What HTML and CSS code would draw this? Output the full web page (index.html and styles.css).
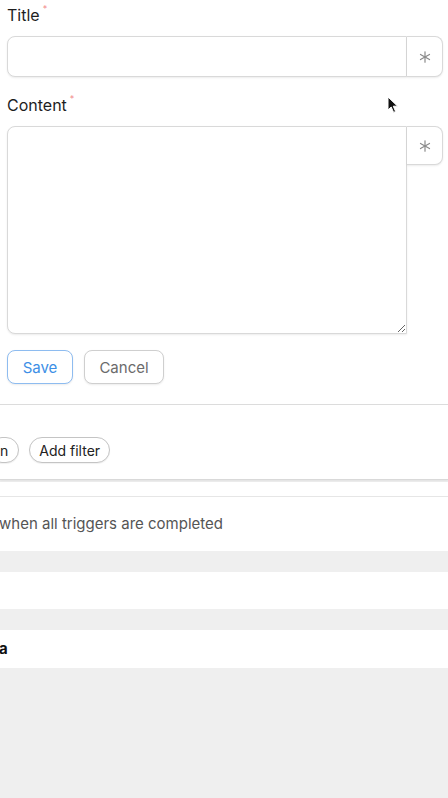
FILE: index.html
```html
<!DOCTYPE html>
<html>
<head>
<meta charset="utf-8">
<link rel="stylesheet" href="styles.css">
</head>
<body>
<div class="page">
  <section class="form">
    <div class="label">Title<span class="req">*</span></div>
    <div class="field">
      <input class="input" type="text">
      <div class="addon">
        <svg width="12" height="12" viewBox="0 0 12 12"><g stroke="#8a8a8a" stroke-width="1.2" stroke-linecap="round"><line x1="6" y1="0.8" x2="6" y2="11.2"/><line x1="1.5" y1="3.4" x2="10.5" y2="8.6"/><line x1="1.5" y1="8.6" x2="10.5" y2="3.4"/></g></svg>
      </div>
    </div>
    <div class="label label-content">Content<span class="req">*</span></div>
    <div class="field field-area">
      <textarea class="area"></textarea>
      <div class="addon addon-area">
        <svg width="12" height="12" viewBox="0 0 12 12"><g stroke="#8a8a8a" stroke-width="1.2" stroke-linecap="round"><line x1="6" y1="0.8" x2="6" y2="11.2"/><line x1="1.5" y1="3.4" x2="10.5" y2="8.6"/><line x1="1.5" y1="8.6" x2="10.5" y2="3.4"/></g></svg>
      </div>
    </div>
    <div class="actions">
      <button class="btn btn-primary">Save</button>
      <button class="btn">Cancel</button>
    </div>
    <svg class="cursor" width="12" height="18" viewBox="0 0 12 18"><path d="M1 1 L1 14 L4.2 11 L6.6 16.4 L8.6 15.5 L6.3 10.2 L10.6 10.2 Z" fill="#111" stroke="#fff" stroke-width="1"/></svg>
  </section>
  <section class="filters">
    <button class="pill pill-cut">n</button>
    <button class="pill">Add filter</button>
  </section>
  <section class="trig">
    <div class="trig-top"></div>
    <div class="trig-text">when all triggers are completed</div>
  </section>
  <div class="gap"></div>
  <section class="row row-empty"></section>
  <div class="gap"></div>
  <section class="row row-bold"><span class="bold-cut">a</span></section>
</div>
</body>
</html>
```
FILE: styles.css
```css
* { box-sizing: border-box; }
html, body {
  margin: 0;
  padding: 0;
  background: #efefef;
  font-family: Inter, "Noto Sans", "Liberation Sans", sans-serif;
  color: #222;
}
.page {
  width: 448px;
  overflow: hidden;
}
.form {
  position: relative;
  background: #fff;
  padding: 5px 5px 20px 7px;
  border-bottom: 1px solid #dcdcdc;
}
.label {
  font-size: 16px;
  line-height: 20px;
  color: #1e1e1e;
  height: 20px;
}
.label-content {
  margin-top: 18px;
}
.req {
  color: #f28b8b;
  font-size: 9px;
  vertical-align: top;
  position: relative;
  top: -6px;
  margin-left: 3px;
}
.field {
  display: flex;
  margin-top: 11px;
}
.field-area {
  align-items: flex-start;
}
.input {
  flex: 1;
  height: 41px;
  margin: 0;
  border: 1px solid #d9d9d9;
  border-radius: 8px 0 0 8px;
  background: #fff;
  box-shadow: 0 1px 2px rgba(0,0,0,0.08);
  outline: none;
}
.addon {
  width: 36px;
  height: 41px;
  border: 1px solid #d9d9d9;
  border-left: none;
  border-radius: 0 8px 8px 0;
  display: flex;
  align-items: center;
  justify-content: center;
  box-shadow: 0 1px 2px rgba(0,0,0,0.08);
  background: #fff;
}
.addon-area {
  height: 39px;
}
.area {
  flex: 1;
  height: 208px;
  margin: 0;
  border: 1px solid #d9d9d9;
  border-radius: 8px 0 0 8px;
  box-shadow: 0 1px 2px rgba(0,0,0,0.08);
  resize: vertical;
  outline: none;
  background: #fff;
}
.actions {
  display: flex;
  gap: 11px;
  margin-top: 16px;
}
.btn {
  height: 34px;
  padding: 0 16px;
  font-family: inherit;
  font-size: 15px;
  color: #6b6b6b;
  background: #fff;
  border: 1px solid #cfcfcf;
  border-radius: 8px;
  box-shadow: 0 1px 2px rgba(0,0,0,0.08);
}
.btn-primary {
  color: #3d8fe6;
  border-color: #8ebcf0;
  width: 66px;
  padding: 0;
}
.btn + .btn {
  width: 80px;
  padding: 0;
}
.cursor {
  position: absolute;
  left: 387px;
  top: 96px;
}
.filters {
  background: #fff;
  display: flex;
  gap: 10px;
  padding: 32px 0 16px 0;
  border-bottom: 1px solid #d9d9d9;
  box-shadow: 0 1px 2px rgba(0,0,0,0.06);
}
.pill {
  height: 26px;
  padding: 0 9px;
  font-family: inherit;
  font-size: 14px;
  color: #222;
  background: #fff;
  border: 1px solid #c4c4c4;
  border-radius: 13px;
  box-shadow: 0 1px 1px rgba(0,0,0,0.06);
}
.pill-cut {
  margin-left: -11px;
  padding: 0 10px;
}
.trig {
  background: #fff;
  margin-top: 2px;
}
.trig-top {
  height: 15px;
  border-bottom: 1px solid #e6e6e6;
}
.trig-text {
  height: 54px;
  line-height: 54px;
  font-size: 15px;
  color: #555;
  margin-left: -1px;
}
.gap {
  height: 21px;
}
.row {
  background: #fff;
  height: 37px;
}
.row-bold {
  height: 38px;
  line-height: 38px;
  font-size: 15px;
  font-weight: 700;
  color: #111;
}
.bold-cut {
  margin-left: -1px;
}
```
